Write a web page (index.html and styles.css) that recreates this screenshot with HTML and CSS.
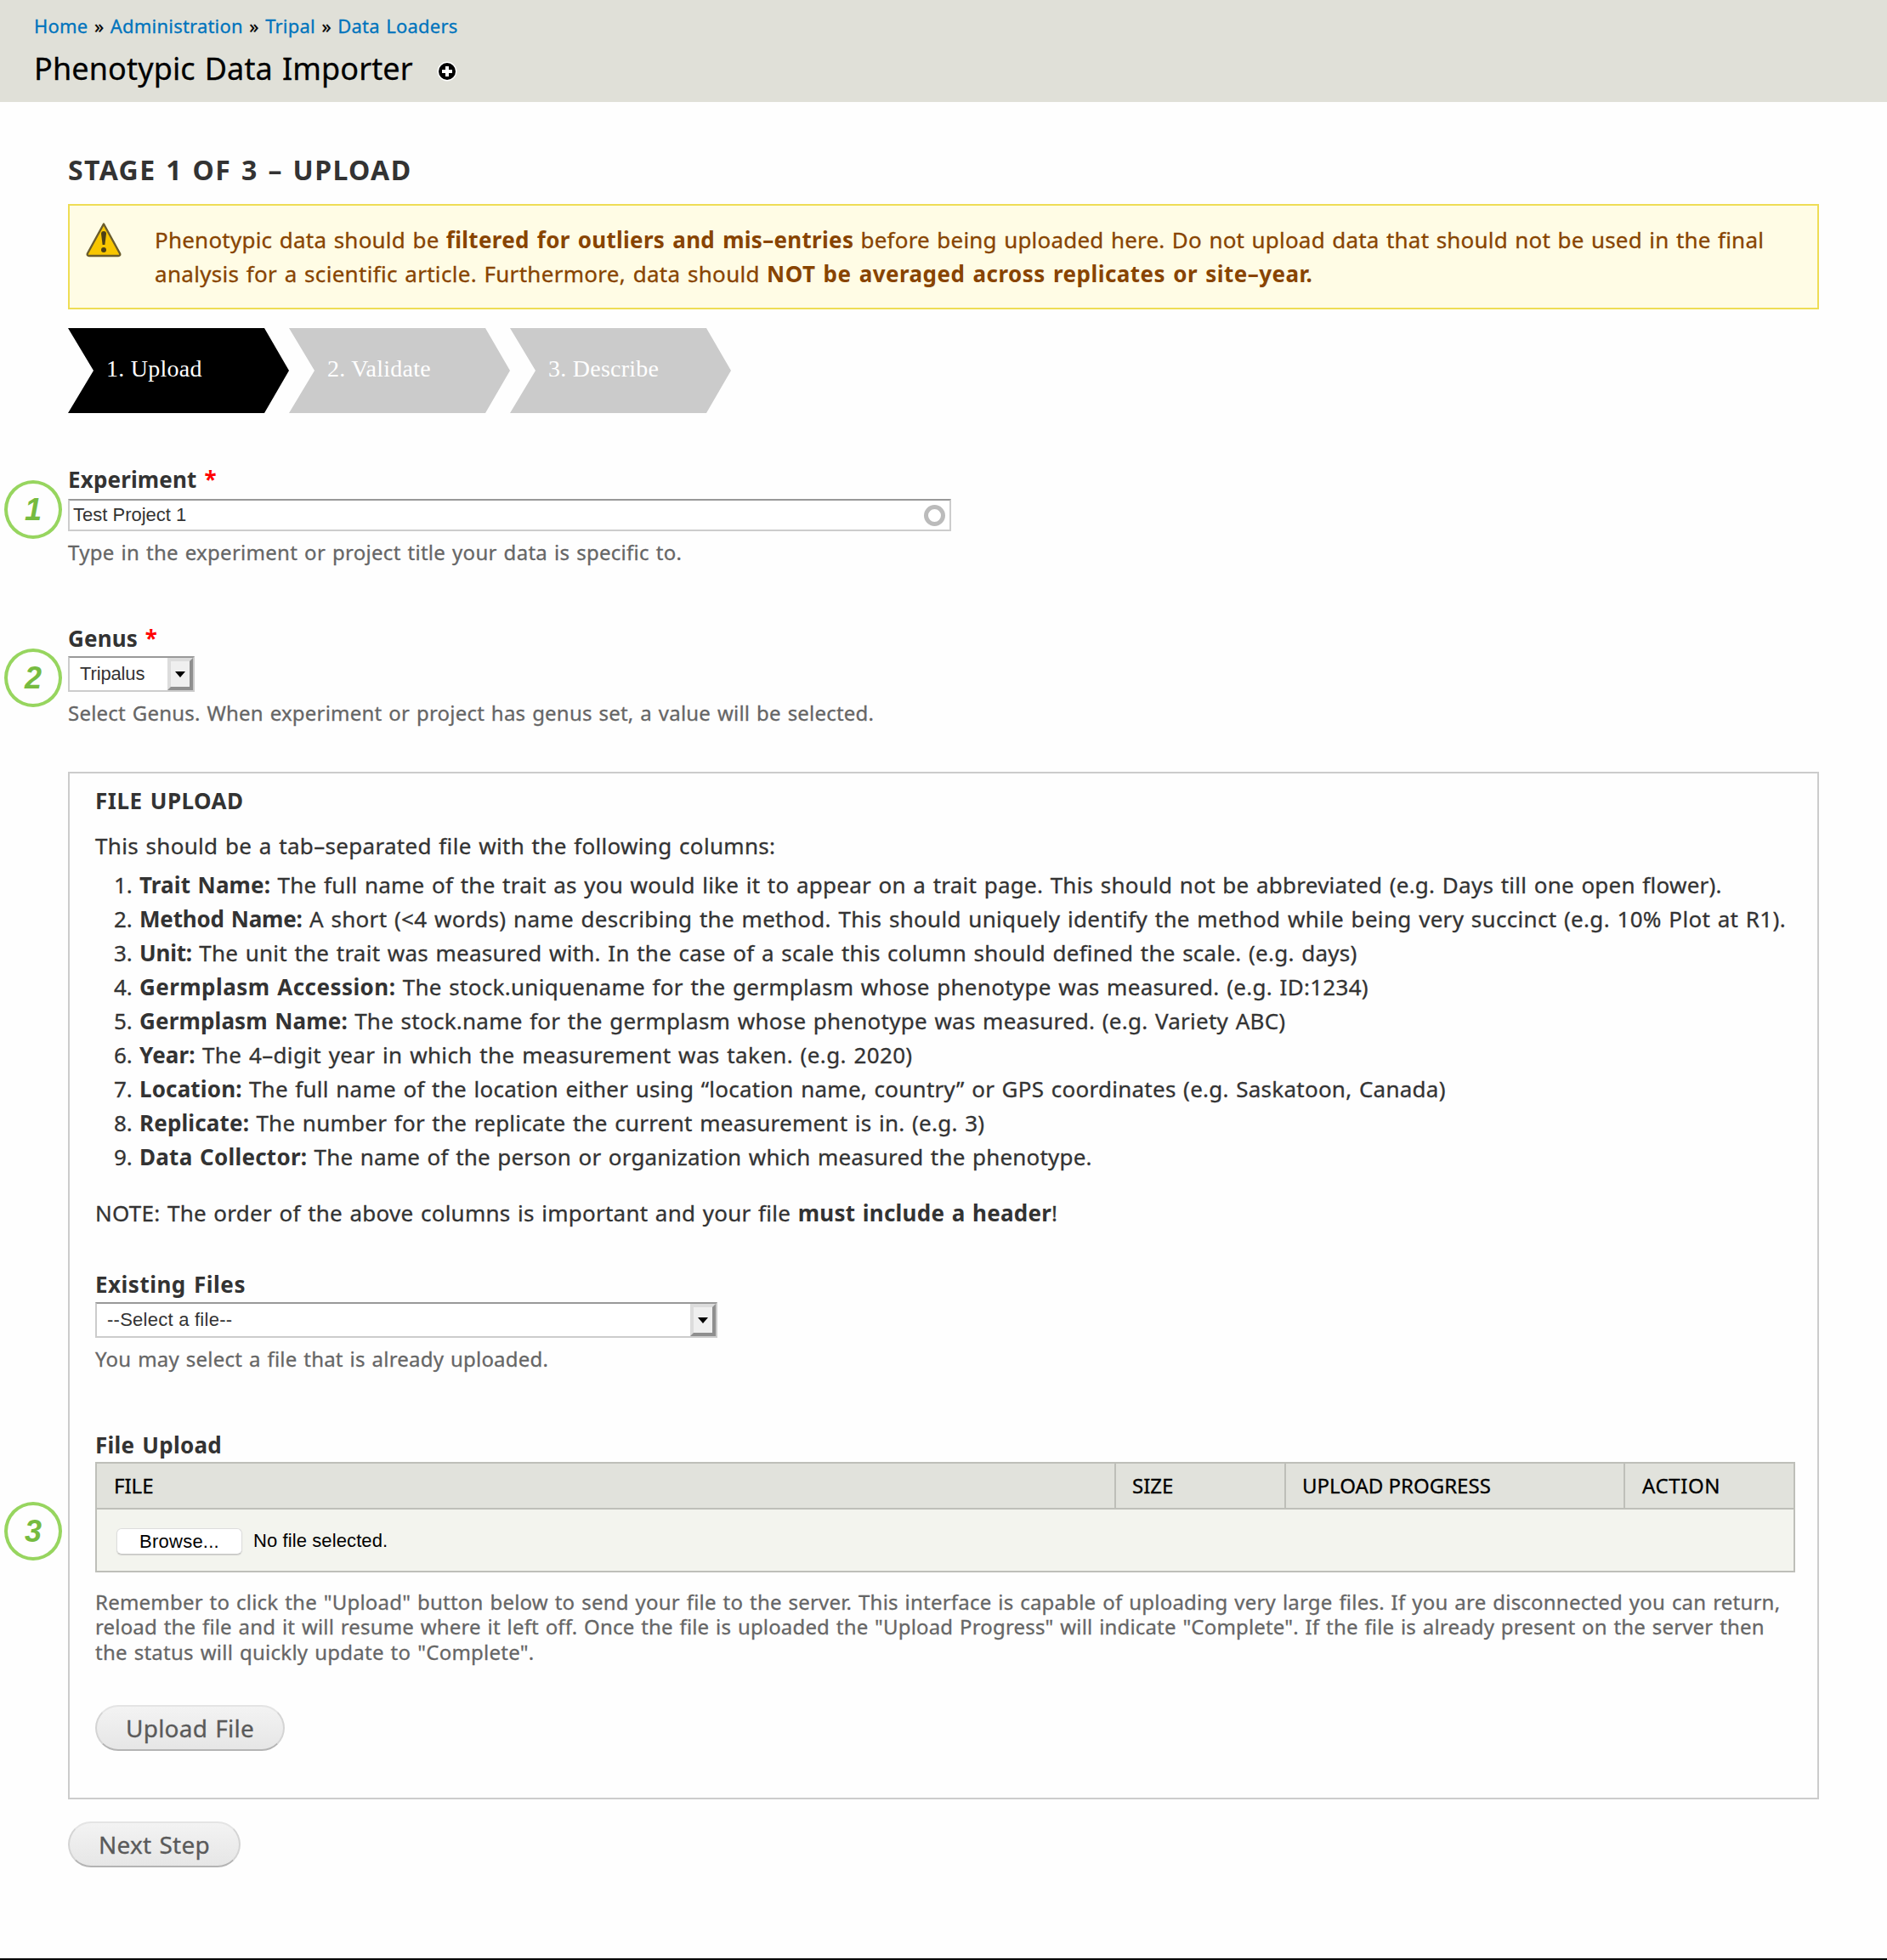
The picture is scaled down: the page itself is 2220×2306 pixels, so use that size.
FILE: index.html
```html
<!DOCTYPE html>
<html lang="en">
<head>
<meta charset="utf-8">
<title>Phenotypic Data Importer</title>
<link rel="stylesheet" href="styles.css">
</head>
<body>
<header class="branding">
  <nav class="breadcrumb"><a>Home</a> » <a>Administration</a> » <a>Tripal</a> » <a>Data Loaders</a></nav>
  <div class="title-row">
    <h1 class="page-title">Phenotypic Data Importer</h1>
    <svg class="shortcut" width="24" height="24" viewBox="0 0 24 24"><circle cx="12" cy="12" r="11.4" fill="#fff"/><circle cx="12" cy="12" r="10" fill="#000"/><path d="M12 6v12M6 12h12" stroke="#fff" stroke-width="4"/></svg>
  </div>
</header>
<main class="content">
  <h2 class="stage">STAGE 1 OF 3 – UPLOAD</h2>
  <div class="warning">
    <svg class="warning-icon" width="44" height="44" viewBox="0 0 44 44"><path d="M22 3.500 41.200 38.500q.600 2.500-2 2.500H4.800q-2.600 0-2-2.500Z" fill="#f8c600" stroke="#6a5c2c" stroke-width="2.400" stroke-linejoin="round"/><path d="M19 15q0-3 3-3t3 3l-1.600 13h-2.800Z" fill="#4c4016"/><circle cx="22" cy="34" r="3" fill="#4c4016"/></svg>
    <div class="warning-text">
      <div><span class="w1">Phenotypic data should be</span> <b class="w2">filtered for outliers and mis–entries</b> <span class="w3">before being uploaded here. Do not upload data that should not be used in the final</span></div>
      <div><span class="w4">analysis for a scientific article. Furthermore, data should</span> <b class="w5">NOT be averaged across replicates or site–year.</b></div>
    </div>
  </div>
  <div class="wizard">
    <div class="step current">1. Upload</div>
    <div class="step">2. Validate</div>
    <div class="step">3. Describe</div>
  </div>

  <section class="field experiment">
    <span class="badge">1</span>
    <label class="label">Experiment <span class="required">*</span></label>
    <div class="textfield"><span>Test Project 1</span><span class="throbber"></span></div>
    <p class="description d1">Type in the experiment or project title your data is specific to.</p>
  </section>

  <section class="field genus">
    <span class="badge">2</span>
    <label class="label">Genus <span class="required">*</span></label>
    <div class="select short"><span>Tripalus</span><span class="drop"></span></div>
    <p class="description">Select Genus. When experiment or project has genus set, a value will be selected.</p>
  </section>

  <section class="fieldset">
    <h3 class="label legend">FILE UPLOAD</h3>
    <p class="intro">This should be a tab–separated file with the following columns:</p>
    <ol class="columns">
      <li><b>Trait Name:</b> <span>The full name of the trait as you would like it to appear on a trait page. This should not be abbreviated (e.g. Days till one open flower).</span></li>
      <li><b>Method Name:</b> <span>A short (&lt;4 words) name describing the method. This should uniquely identify the method while being very succinct (e.g. 10% Plot at R1).</span></li>
      <li><b>Unit:</b> <span>The unit the trait was measured with. In the case of a scale this column should defined the scale. (e.g. days)</span></li>
      <li><b>Germplasm Accession:</b> <span>The stock.uniquename for the germplasm whose phenotype was measured. (e.g. ID:1234)</span></li>
      <li><b>Germplasm Name:</b> <span>The stock.name for the germplasm whose phenotype was measured. (e.g. Variety ABC)</span></li>
      <li><b>Year:</b> <span>The 4–digit year in which the measurement was taken. (e.g. 2020)</span></li>
      <li><b>Location:</b> <span>The full name of the location either using “location name, country” or GPS coordinates (e.g. Saskatoon, Canada)</span></li>
      <li><b>Replicate:</b> <span>The number for the replicate the current measurement is in. (e.g. 3)</span></li>
      <li><b>Data Collector:</b> <span>The name of the person or organization which measured the phenotype.</span></li>
    </ol>
    <p class="note">NOTE: The order of the above columns is important and your file <b>must include a header</b>!</p>

    <label class="label existing">Existing Files</label>
    <div class="select long"><span>--Select a file--</span><span class="drop"></span></div>
    <p class="description">You may select a file that is already uploaded.</p>

    <label class="label upload">File Upload</label>
    <div class="upload-wrap">
      <span class="badge badge-table">3</span>
      <div class="table">
        <div class="thead"><span>FILE</span><span>SIZE</span><span>UPLOAD PROGRESS</span><span>ACTION</span></div>
        <div class="trow"><span class="browse">Browse...</span><span class="nofile">No file selected.</span></div>
      </div>
    </div>
    <p class="help"><span class="h1">Remember to click the "Upload" button below to send your file to the server. This interface is capable of uploading very large files. If you are disconnected you can return,</span><br><span class="h2">reload the file and it will resume where it left off. Once the file is uploaded the "Upload Progress" will indicate "Complete". If the file is already present on the server then</span><br><span>the status will quickly update to "Complete".</span></p>
    <button class="button upload-file">Upload File</button>
  </section>
  <button class="button next">Next Step</button>
</main>
</body>
</html>
```
FILE: styles.css
```css
* { box-sizing: border-box; margin: 0; padding: 0; }
html { background: #fefefe; }
body {
  height: 2306px;
  background: #fefefe;
  border-bottom: 2px solid #000;
  color: #333;
  font: 26px/40px "Noto Sans", sans-serif;
  -webkit-text-stroke: .3px;
  white-space: nowrap;
  overflow: hidden;
}
b, .label, .stage, .step, .textfield, .select, .trow, .badge { -webkit-text-stroke: 0; }
.branding { height: 120px; padding: 15px 40px 0; background: #e0e0d8; color: #000; }
.breadcrumb { font-size: 22px; line-height: 30px; letter-spacing: .2px; word-spacing: 1.6px; }
.breadcrumb a { color: #0074bd; }
.title-row { display: flex; align-items: center; gap: 28px; margin-top: 12px; }
.page-title { font-size: 36px; font-weight: 400; line-height: 48px; letter-spacing: .13px; word-spacing: 1.5px; }
.shortcut { margin-top: 6px; }

.content { padding: 0 80px; }
.stage { margin-top: 60px; font-size: 32px; line-height: 40px; letter-spacing: 1.4px; word-spacing: 2px; }
.warning {
  display: flex; height: 124px; margin-top: 20px; padding: 20px 0 0 18px;
  border: 2px solid #ed5; background: #fffce5; color: #840;
}
.warning-icon { margin: -2px 38px 0 0; flex: none; }
.warning-text { word-spacing: 1.5px; }
.warning-text b { word-spacing: 2px; }
.w1 { letter-spacing: .22px; }
.w2 { letter-spacing: .3px; }
.w3 { letter-spacing: .19px; }
.w4 { letter-spacing: .3px; }
.w5 { letter-spacing: .46px; }

.wizard { display: flex; margin-top: 22px; }
.step {
  width: 260px; height: 100px; padding-left: 45px;
  background: #cbcbcb; color: #fff;
  font: 28px/95px "Liberation Serif", serif; letter-spacing: .25px;
  clip-path: polygon(0 0, 231px 0, 100% 50%, 231px 100%, 0 100%, 30px 50%);
}
.step.current { background: #000; }

.field { position: relative; }
.experiment { margin-top: 63px; }
.genus { margin-top: 71px; }
.label { display: block; font-size: 26px; font-weight: 700; line-height: 30px; letter-spacing: .15px; word-spacing: 2px; }
.required { color: #f00; }
.badge {
  position: absolute; left: -75px; top: 16px; width: 68px; height: 69px;
  border: 4px solid #97d55f; border-radius: 50%;
  color: #76bb40; font: italic 700 36px/61px "Liberation Sans", sans-serif; text-align: center;
}
.genus .badge { top: 27px; }
.badge-table { left: -107px; top: 47px; }
.textfield {
  display: flex; align-items: center; justify-content: space-between;
  width: 1039px; height: 38px; margin-top: 8px; padding: 0 5px 0 4px;
  border: 2px solid #ccc; border-top-color: #999; background: #fff;
  font: 22px/34px "Liberation Sans", sans-serif;
}
.throbber { width: 25px; height: 25px; border: 5px solid #bbb; border-radius: 50%; }
.description { margin-top: 10px; color: #666; font-size: 24px; line-height: 30px; letter-spacing: .21px; word-spacing: 1.4px; }
.d1 { letter-spacing: .28px; }
.select {
  display: flex; justify-content: space-between; height: 42px; margin-top: 6px; padding-left: 12px;
  border: 2px solid #ccc; border-top-color: #999; background: #fff;
  font: 22px/38px "Liberation Sans", sans-serif;
}
.short { width: 149px; letter-spacing: -.15px; }
.long { width: 732px; letter-spacing: .25px; }
.drop {
  display: flex; align-items: center; justify-content: center;
  width: 30px; height: 38px; background: #efefef;
  border: 4px solid; border-color: #dcdcdc #8f8f8f #8f8f8f #dcdcdc;
}
.drop::before { content: ""; border: 6.5px solid transparent; border-top: 7px solid #000; border-bottom: 0; }

.fieldset { height: 1209px; margin-top: 54px; padding: 17px 26px 0 30px; border: 2px solid #ccc; }
.legend { letter-spacing: .5px; }
.intro { margin-top: 18px; letter-spacing: .31px; word-spacing: 1.5px; }
.columns { margin-top: 6px; padding-left: 52px; word-spacing: 1.5px; }
.columns b { letter-spacing: .15px; }
.columns span { letter-spacing: .25px; }
.columns li:nth-child(2) b, .columns li:nth-child(3) b { letter-spacing: -.2px; }
.columns li:nth-child(4) b { letter-spacing: .45px; }
.columns li:nth-child(2) span { letter-spacing: .31px; }
.columns li:nth-child(4) span { letter-spacing: .29px; }
.columns li:nth-child(6) span { letter-spacing: .36px; }
.columns li:nth-child(9) b { letter-spacing: .25px; }
.columns li:nth-child(9) span { letter-spacing: .19px; }
.note { margin-top: 26px; letter-spacing: .25px; word-spacing: 1.5px; }
.existing { margin-top: 49px; letter-spacing: .5px; }
.upload { margin-top: 71px; letter-spacing: .25px; }
.upload-wrap { position: relative; margin-top: 5px; }
.table { width: 2000px; height: 130px; border: 2px solid #bebfb9; background: #f3f4ee; color: #000; }
.thead {
  display: grid; grid-template-columns: 1197px 200px 399px 1fr; height: 54px;
  background: #e1e2dc; border-bottom: 2px solid #bebfb9; font-size: 24px; line-height: 52px;
}
.thead span { padding-left: 19px; border-left: 2px solid #bebfb9; }
.thead span:first-child { padding-left: 20px; border-left: 0; }
.thead span:last-child { padding-left: 20px; letter-spacing: .6px; }
.trow { display: flex; align-items: center; height: 74px; padding-left: 23px; font: 22px/30px "Liberation Sans", sans-serif; }
.browse {
  width: 148px; height: 31px; border: 1px solid #ddd; border-bottom-color: #c6c6c4; border-radius: 6px;
  background: #fff; box-shadow: 0 1px 1px #d4d4d0; text-align: center; letter-spacing: .25px;
}
.nofile { margin-left: 13px; letter-spacing: .1px; }
.help { margin-top: 20px; color: #666; font-size: 24px; line-height: 29.400px; letter-spacing: .25px; word-spacing: 1.4px; }
.help .h1 { letter-spacing: .21px; }
.help .h2 { letter-spacing: .16px; }
.button {
  display: block; height: 54px; border: 2px solid #d4d4d4; border-top-color: #e4e4e4; border-bottom-color: #b4b4b4;
  border-radius: 27px; background: linear-gradient(#f3f3f3, #e6e6e6);
  color: #5a5a5a; font: 28px/49px "Noto Sans", sans-serif; letter-spacing: .25px; word-spacing: 1.5px;
}
.upload-file { width: 223px; margin-top: 48px; }
.next { width: 203px; margin-top: 26px; }
```
